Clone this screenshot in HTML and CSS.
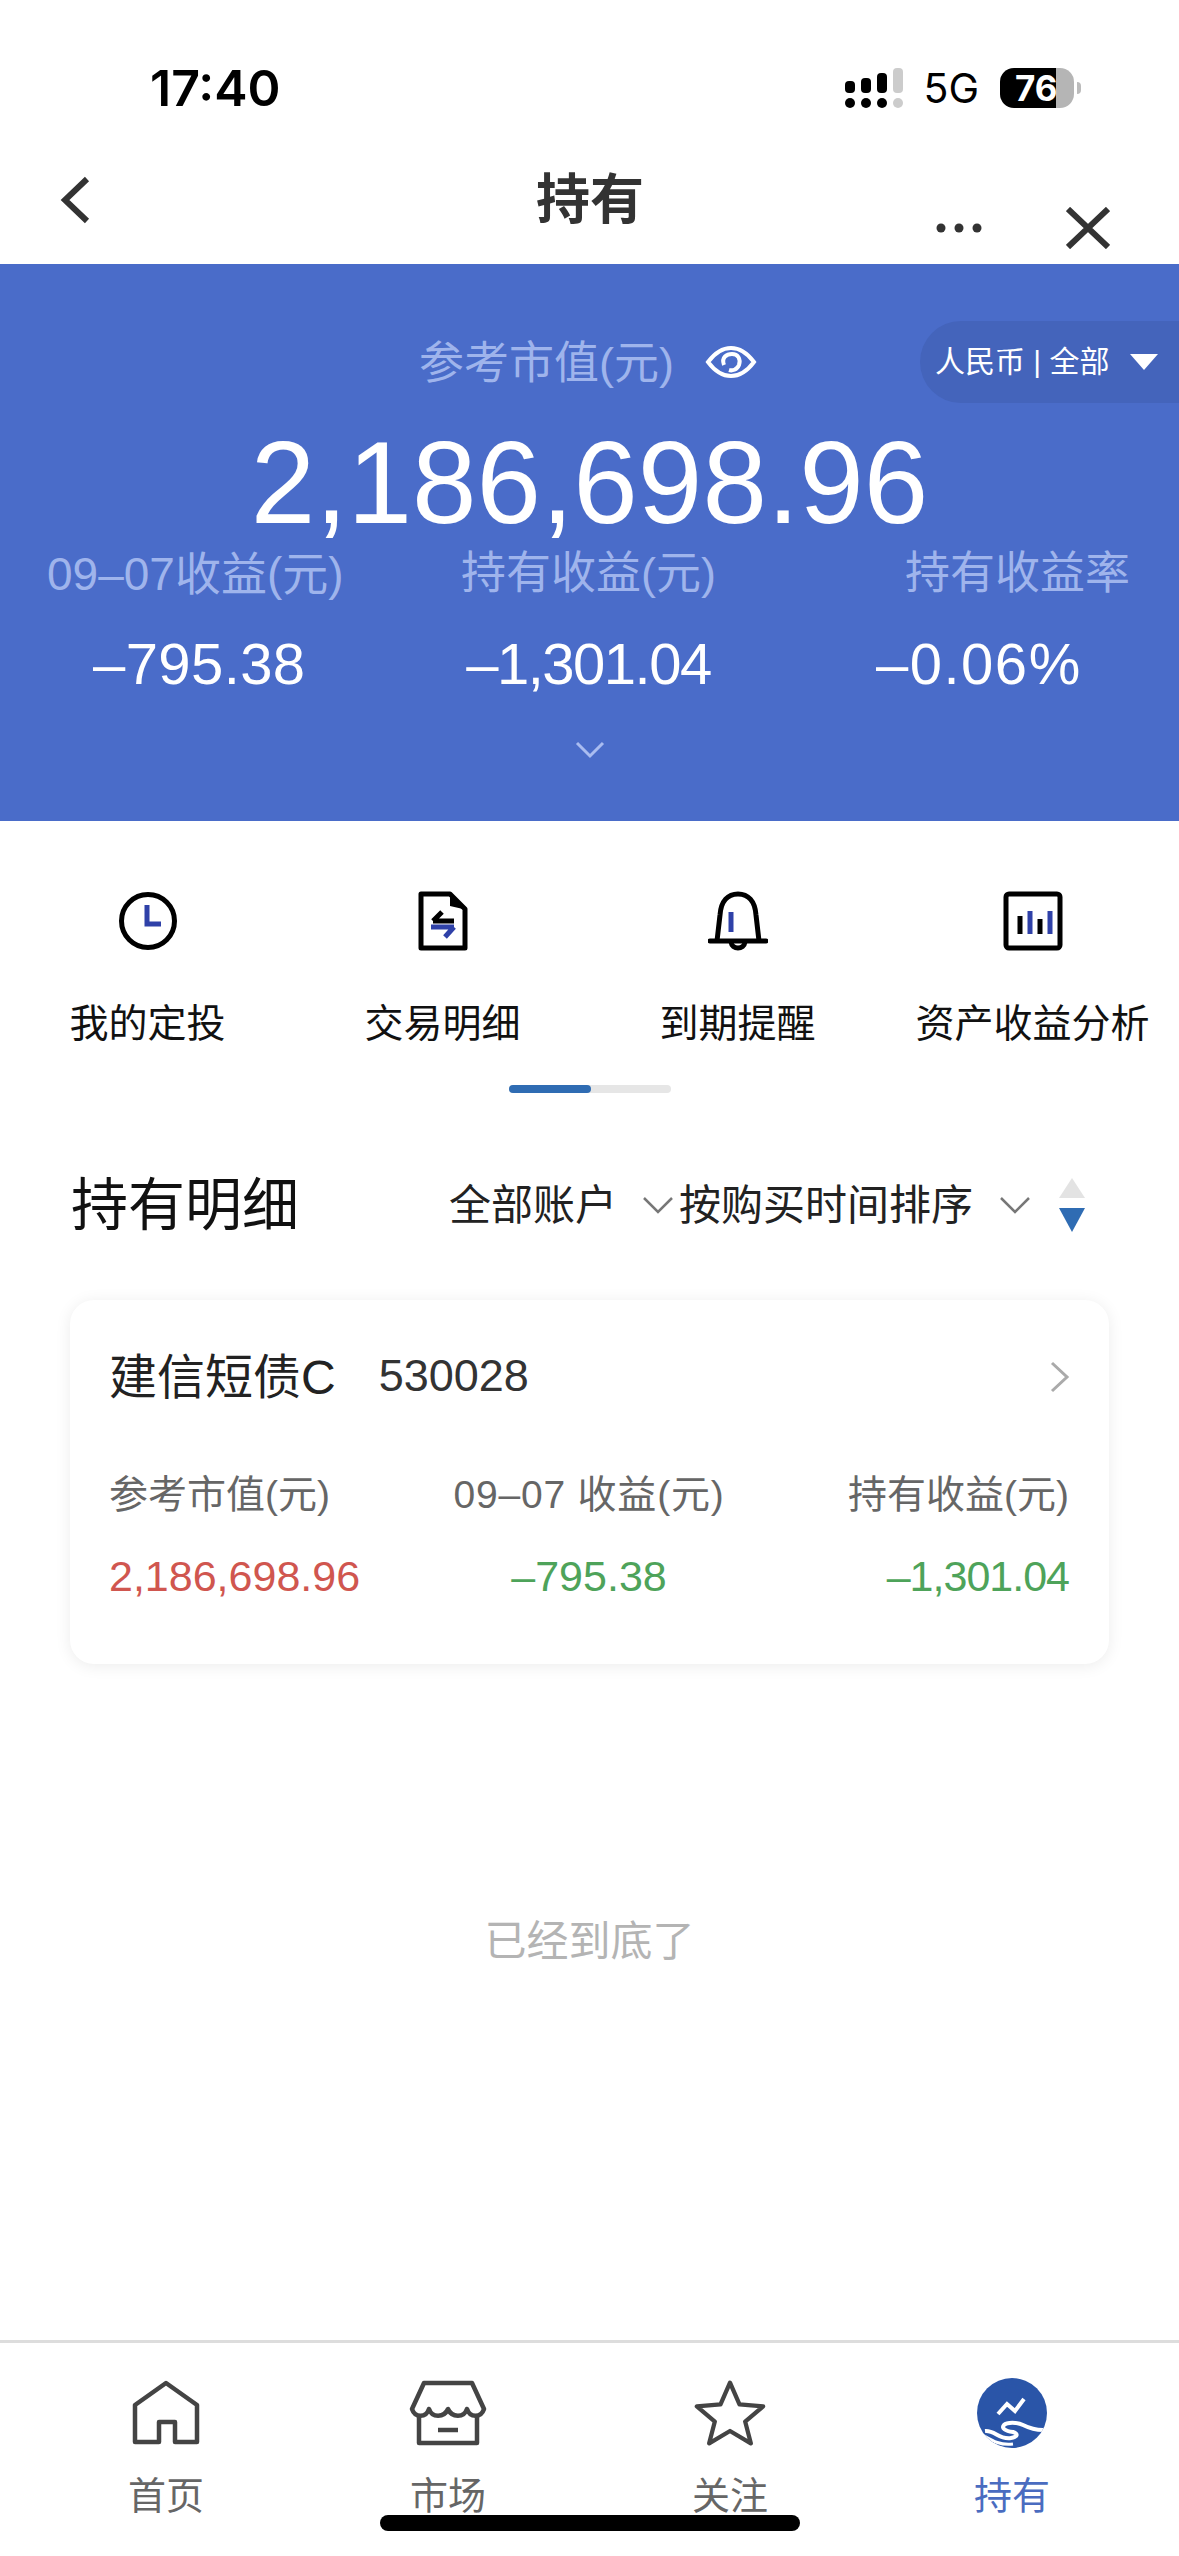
FILE: index.html

```html
<!DOCTYPE html>
<html lang="zh-CN">
<head>
  <meta charset="UTF-8" />
  <meta name="viewport" content="width=device-width, initial-scale=1.0" />
  <title>持有</title>
  <link rel="stylesheet" href="styles.css">
</head>
<body>
  <div class="page">
    <div class="status">
      <div class="time">17:40</div>
      <div class="status-right">
        <svg class="signal" width="60" height="42" viewBox="0 0 60 42">
          <rect x="0" y="14" width="10" height="12" rx="4" fill="#000"/>
          <rect x="16" y="11" width="10" height="15" rx="4" fill="#000"/>
          <rect x="32" y="6" width="10" height="20" rx="4" fill="#000"/>
          <rect x="48" y="1" width="10" height="25" rx="4" fill="#ccc"/>
          <circle cx="5" cy="36" r="5" fill="#000"/>
          <circle cx="21" cy="36" r="5" fill="#000"/>
          <circle cx="37" cy="36" r="5" fill="#000"/>
          <circle cx="53" cy="36" r="5" fill="#ccc"/>
        </svg>
        <span class="net">5G</span>
        <div class="battery"><span>76</span></div>
        <div class="battery-nub"></div>
      </div>
    </div>

    <header class="nav">
      <svg class="back" width="30" height="48" viewBox="0 0 30 48">
        <path d="M27 3 L5 24 L27 45" fill="none" stroke="#333" stroke-width="6"/>
      </svg>
      <div class="nav-title">持有</div>
      <div class="nav-actions">
        <svg width="50" height="12" viewBox="0 0 50 12">
          <circle cx="5" cy="6" r="4.5" fill="#333"/>
          <circle cx="23" cy="6" r="4.5" fill="#333"/>
          <circle cx="41" cy="6" r="4.5" fill="#333"/>
        </svg>
        <svg width="44" height="42" viewBox="0 0 44 42">
          <path d="M2 2 L42 40 M42 2 L2 40" stroke="#333" stroke-width="6"/>
        </svg>
      </div>
    </header>

    <section class="hero">
      <div class="pill">
        <span class="pill-text">人民币 | 全部</span>
        <svg width="28" height="18" viewBox="0 0 28 18"><path d="M0 1 H28 L14 17 Z" fill="#fff"/></svg>
      </div>
      <div class="hero-label">
        <span>参考市值(元)</span>
        <svg class="eye" width="52" height="34" viewBox="0 0 52 34">
          <path d="M3 17 C12 5 20 3 26 3 C32 3 40 5 49 17 C40 29 32 31 26 31 C20 31 12 29 3 17 Z" fill="none" stroke="#fff" stroke-width="4"/>
          <path d="M19 20 C16 12 22 9 27 9 C33 9 36 14 34 20 C32 25 27 26 24 25" fill="none" stroke="#fff" stroke-width="4"/>
        </svg>
      </div>
      <div class="hero-total">2,186,698.96</div>
      <div class="stats">
        <div class="stat stat-first">
          <div class="stat-label">09–07收益(元)</div>
          <div class="stat-value">–795.38</div>
        </div>
        <div class="stat stat-mid">
          <div class="stat-label">持有收益(元)</div>
          <div class="stat-value tight">–1,301.04</div>
        </div>
        <div class="stat stat-last">
          <div class="stat-label">持有收益率</div>
          <div class="stat-value">–0.06%</div>
        </div>
      </div>
      <svg class="hero-more" width="32" height="20" viewBox="0 0 32 20">
        <path d="M3 3 L16 16 L29 3" fill="none" stroke="#a9bcf0" stroke-width="3"/>
      </svg>
    </section>

    <section class="shortcuts">
      <div class="shortcut">
        <svg width="60" height="60" viewBox="0 0 60 60">
          <circle cx="30" cy="30" r="26.5" fill="none" stroke="#000" stroke-width="5"/>
          <path d="M29 14 V33 H43" fill="none" stroke="#2f41a8" stroke-width="5"/>
        </svg>
        <div class="shortcut-name">我的定投</div>
      </div>
      <div class="shortcut">
        <svg width="60" height="60" viewBox="0 0 60 60">
          <path d="M8 3 H37 L52 18 V57 H8 Z" fill="none" stroke="#000" stroke-width="5" stroke-linejoin="round"/>
          <path d="M37 3 V15 L50 18 Z" fill="#000"/>
          <path d="M20 30 H41 M20 30 L29 21" fill="none" stroke="#000" stroke-width="5"/>
          <path d="M18 36 H41 M41 36 L32 46" fill="none" stroke="#2f41a8" stroke-width="5"/>
        </svg>
        <div class="shortcut-name">交易明细</div>
      </div>
      <div class="shortcut">
        <svg width="60" height="60" viewBox="0 0 60 60">
          <path d="M9 50 L12 24 C13 10 20 3 30 3 C40 3 47 10 48 24 L51 50" fill="none" stroke="#000" stroke-width="5"/>
          <path d="M2 50 H58" stroke="#000" stroke-width="5" stroke-linecap="round"/>
          <path d="M23 51 C24 59 36 59 37 51" fill="none" stroke="#000" stroke-width="5"/>
          <path d="M23 21 V41" stroke="#2f41a8" stroke-width="5"/>
        </svg>
        <div class="shortcut-name">到期提醒</div>
      </div>
      <div class="shortcut">
        <svg width="60" height="60" viewBox="0 0 60 60">
          <rect x="3" y="3" width="54" height="54" rx="3" fill="none" stroke="#000" stroke-width="5"/>
          <path d="M17 25 V43 M37 28 V43" stroke="#000" stroke-width="5"/>
          <path d="M27 20 V43 M47 20 V43" stroke="#2f41a8" stroke-width="5"/>
        </svg>
        <div class="shortcut-name">资产收益分析</div>
      </div>
    </section>
    <div class="pager"><div class="pager-fill"></div></div>

    <section class="detail-head">
      <h2>持有明细</h2>
      <div class="filter filter-first">
        <span>全部账户</span>
        <svg width="32" height="18" viewBox="0 0 32 18"><path d="M2 2 L16 16 L30 2" fill="none" stroke="#777" stroke-width="2.5"/></svg>
      </div>
      <div class="filter">
        <span>按购买时间排序</span>
        <svg width="32" height="18" viewBox="0 0 32 18"><path d="M2 2 L16 16 L30 2" fill="none" stroke="#777" stroke-width="2.5"/></svg>
      </div>
      <svg class="sort" width="26" height="54" viewBox="0 0 26 54">
        <path d="M13 0 L26 20 H0 Z" fill="#e3e3e3"/>
        <path d="M0 30 H26 L13 54 Z" fill="#2f6cb3"/>
      </svg>
    </section>

    <div class="card">
      <div class="card-head">
        <span class="fund-name">建信短债C</span>
        <span class="fund-code">530028</span>
        <svg class="card-go" width="22" height="34" viewBox="0 0 22 34"><path d="M3 3 L18 17 L3 31" fill="none" stroke="#aaa" stroke-width="3"/></svg>
      </div>
      <div class="card-cols">
        <div class="card-col">
          <div class="col-label">参考市值(元)</div>
          <div class="col-value up">2,186,698.96</div>
        </div>
        <div class="card-col col-mid">
          <div class="col-label">09–07 收益(元)</div>
          <div class="col-value down">–795.38</div>
        </div>
        <div class="card-col col-end">
          <div class="col-label">持有收益(元)</div>
          <div class="col-value down tight">–1,301.04</div>
        </div>
      </div>
    </div>

    <div class="bottom-note">已经到底了</div>

    <nav class="tabs">
      <div class="tab">
        <svg width="70" height="70" viewBox="0 0 70 70">
          <path d="M35 5 L66 27 V64 H44 V44 H28 V64 H4 V27 Z" fill="none" stroke="#444" stroke-width="4.5" stroke-linejoin="round"/>
        </svg>
        <span>首页</span>
      </div>
      <div class="tab">
        <svg width="78" height="70" viewBox="0 0 78 70">
          <path d="M15 5 H63 L75 31 C72 40 61 40 58 31 C55 40 43 40 39 31 C35 40 23 40 20 31 C17 40 6 40 3 31 Z" fill="none" stroke="#444" stroke-width="4.5" stroke-linejoin="round"/>
          <path d="M10 38 V65 H68 V38" fill="none" stroke="#444" stroke-width="4.5" stroke-linejoin="round"/>
          <path d="M29 52 H49" stroke="#444" stroke-width="4.5"/>
        </svg>
        <span>市场</span>
      </div>
      <div class="tab">
        <svg width="72" height="70" viewBox="0 0 76 70">
          <path d="M38 3 L48 26 L73 28 L54 44 L60 67 L38 54 L16 67 L22 44 L3 28 L28 26 Z" fill="none" stroke="#444" stroke-width="4.5" stroke-linejoin="round"/>
        </svg>
        <span>关注</span>
      </div>
      <div class="tab tab-on">
        <svg width="70" height="70" viewBox="0 0 70 70">
          <defs>
            <clipPath id="disc"><circle cx="35" cy="35" r="35"/></clipPath>
          </defs>
          <circle cx="35" cy="35" r="35" fill="#2a55a8"/>
          <path d="M21 36 L30 26 L38 33 L47 21" fill="none" stroke="#fff" stroke-width="4"/>
          <g clip-path="url(#disc)">
            <path d="M8 53 C18 52 22 62 34 60 C40 59 42 56 36 54 C28 53 24 50 27 47 C30 44 40 44 46 47 C52 50 58 52 66 52" fill="none" stroke="#fff" stroke-width="4"/>
            <path d="M0 54 C12 60 20 68 36 66" fill="none" stroke="#fff" stroke-width="3"/>
          </g>
        </svg>
        <span>持有</span>
      </div>
    </nav>
    <div class="home-bar"></div>
  </div>
</body>
</html>
```

FILE: styles.css

```css
* {
  box-sizing: border-box;
}

body {
  margin: 0;
  background-color: white;
  font-family: "Liberation Sans", "Noto Sans CJK SC", sans-serif;
  color: #222;
}

svg {
  display: block;
  flex: none;
}

.page {
  position: relative;
  width: 1179px;
  height: 2556px;
  overflow: hidden;
  display: flex;
  flex-direction: column;
}

/* status bar */
.status {
  height: 176px;
  padding: 67px 98px 0 150px;
  display: flex;
  justify-content: space-between;
  align-items: flex-start;
}

.time {
  font-family: Inter, sans-serif;
  font-size: 50px;
  font-weight: 600;
  line-height: 42px;
  color: #000;
}

.status-right {
  display: flex;
  align-items: center;
  height: 42px;
}

.net {
  margin-left: 18px;
  font-family: Inter, sans-serif;
  font-size: 41px;
  line-height: 42px;
  color: #000;
}

.battery {
  width: 74px;
  height: 40px;
  margin-left: 21px;
  border-radius: 14px;
  background: linear-gradient(90deg, #000 76%, #b5b5b5 76%);
  color: white;
  font-family: Inter, sans-serif;
  font-size: 35px;
  font-weight: 700;
  line-height: 40px;
  padding-left: 15px;
}

.battery-nub {
  width: 4px;
  height: 12px;
  margin-left: 3px;
  border-radius: 0 6px 6px 0;
  background-color: #bbb;
}

/* title row */
.nav {
  height: 88px;
  padding: 0 69px 0 60px;
  display: grid;
  grid-template-columns: 1fr 110px 1fr;
  justify-items: center;
  align-items: start;
}

.back {
  justify-self: start;
}

.nav-title {
  font-size: 54px;
  font-weight: 700;
  line-height: 48px;
  color: #333;
  white-space: nowrap;
  margin-left: 10px;
}

.nav-actions {
  justify-self: end;
  display: flex;
  align-items: center;
  gap: 80px;
  margin-top: 31px;
}

/* blue summary */
.hero {
  position: relative;
  height: 557px;
  background-color: #4a6cc9;
  color: white;
  padding-top: 67px;
}

.pill {
  position: absolute;
  top: 57px;
  right: 0;
  width: 259px;
  height: 82px;
  padding-left: 15px;
  border-radius: 41px 0 0 41px;
  background-color: #4464bb;
  display: flex;
  align-items: center;
  gap: 21px;
  font-size: 30px;
}

.pill-text {
  padding-bottom: 6px;
}

.hero-label {
  height: 56px;
  display: flex;
  justify-content: center;
  align-items: center;
  gap: 31px;
  font-size: 45px;
  color: #9fb4ec;
  padding-right: 3px;
}

.eye {
  margin-top: 6px;
}

.hero-total {
  margin-top: 38px;
  font-size: 116px;
  line-height: 116px;
  text-align: center;
}

.stats {
  margin-top: 8px;
  padding: 0 49px 0 47px;
  display: grid;
  grid-template-columns: repeat(3, 1fr);
}

.stat {
  display: flex;
  flex-direction: column;
  align-items: center;
}

.stat-first {
  justify-self: start;
}

.stat-first .stat-value {
  margin-left: 8px;
  letter-spacing: 0.4px;
}

.stat-mid {
  justify-self: center;
}

.stat-mid .stat-label,
.stat-last .stat-label {
  font-size: 45px;
}

.stat-last {
  justify-self: end;
}

.stat-label {
  font-size: 46px;
  line-height: 50px;
  color: #9fb4ec;
  white-space: nowrap;
}

.stat-value {
  margin-top: 30px;
  font-size: 58px;
  line-height: 70px;
  white-space: nowrap;
}

.stat-value.tight {
  letter-spacing: -1.5px;
}

.stat-last .stat-value {
  align-self: flex-start;
  margin-left: -29px;
  letter-spacing: 1.5px;
}

.hero-more {
  margin: 41px auto 0;
}

/* shortcut row */
.shortcuts {
  margin-top: 70px;
  display: grid;
  grid-template-columns: repeat(4, 295px);
}

.shortcut {
  display: flex;
  flex-direction: column;
  align-items: center;
}

.shortcut-name {
  margin-top: 48px;
  font-size: 39px;
  line-height: 50px;
  color: #111;
}

.pager {
  width: 162px;
  height: 8px;
  margin: 36px auto 0;
  border-radius: 4px;
  background-color: #e6e6e6;
}

.pager-fill {
  width: 82px;
  height: 8px;
  border-radius: 4px;
  background-color: #2f6cb3;
}

/* holdings list */
.detail-head {
  margin-top: 77px;
  padding: 0 94px 0 71px;
  height: 70px;
  display: flex;
  align-items: center;
}

.detail-head h2 {
  margin: 0 auto 0 0;
  font-size: 57px;
  font-weight: 400;
  line-height: 70px;
  color: #111;
}

.filter {
  display: flex;
  align-items: center;
  font-size: 42px;
  color: #222;
}

.filter span {
  margin-top: -8px;
}

.filter svg {
  margin-left: 26px;
}

.filter-first svg {
  margin-left: 25px;
  margin-right: 5px;
}

.sort {
  margin-left: 28px;
}

.card {
  margin: 60px 70px 0;
  height: 364px;
  padding: 0 40px 0 39px;
  border-radius: 24px;
  background-color: white;
  box-shadow: 0 2px 16px rgba(0, 0, 0, 0.08);
}

.card-head {
  height: 146px;
  display: flex;
  align-items: center;
}

.fund-name {
  font-size: 48px;
  color: #222;
}

.fund-code {
  margin: 6px 0 0 43px;
  font-size: 45px;
  color: #333;
}

.card-go {
  margin: 8px -2px 0 auto;
}

.card-cols {
  margin-top: 22px;
  display: grid;
  grid-template-columns: repeat(3, 1fr);
}

.col-mid {
  text-align: center;
}

.col-mid .col-label {
  letter-spacing: 0.8px;
}

.col-end {
  text-align: right;
}

.col-label {
  font-size: 39px;
  line-height: 54px;
  color: #666;
  white-space: nowrap;
}

.col-value {
  margin-top: 27px;
  font-size: 43px;
  line-height: 54px;
}

.col-value.tight {
  letter-spacing: -1px;
}

.up {
  color: #d0564f;
}

.down {
  color: #4ea35a;
}

.bottom-note {
  margin-top: 252px;
  font-size: 42px;
  line-height: 52px;
  text-align: center;
  color: #b4b4b4;
}

/* tab bar */
.tabs {
  position: absolute;
  left: 0;
  right: 0;
  bottom: 0;
  height: 216px;
  padding-left: 25px;
  border-top: 3px solid #ddd;
  display: grid;
  grid-template-columns: repeat(4, 282px);
}

.tab {
  padding-top: 35px;
  display: flex;
  flex-direction: column;
  align-items: center;
  font-size: 38px;
  line-height: 48px;
  color: #666;
}

.tab span {
  margin-top: 24px;
}

.tab-on {
  color: #4a6cc0;
}

.home-bar {
  position: absolute;
  left: 380px;
  bottom: 25px;
  width: 420px;
  height: 16px;
  border-radius: 8px;
  background-color: black;
}
```
